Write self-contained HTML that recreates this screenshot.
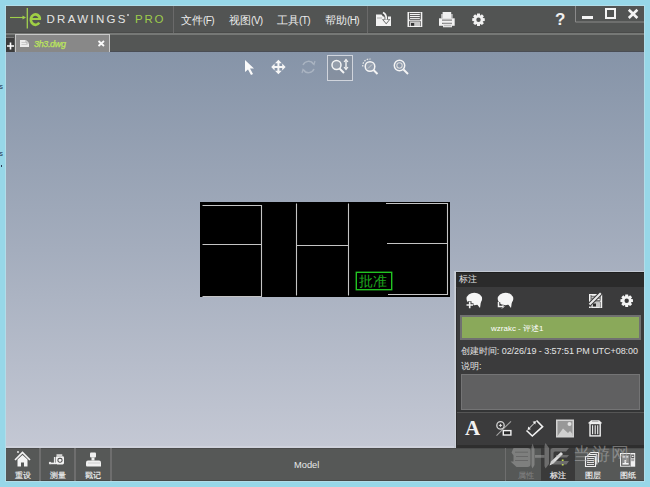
<!DOCTYPE html>
<html><head><meta charset="utf-8">
<style>
*{margin:0;padding:0;box-sizing:border-box}
html,body{width:650px;height:487px;overflow:hidden;background:#97d7e8;font-family:"Liberation Sans",sans-serif;position:relative}
.a{position:absolute}
.menu{color:#ececec;font-size:10.6px;top:14px;line-height:13px;white-space:nowrap}
.menu b{font-weight:normal;font-size:10px;letter-spacing:-0.6px}
.sep{background:#6a6a6a;width:1px}
svg{position:absolute;overflow:visible}
.bt{color:#f0f0f0;-webkit-text-stroke-width:0.15px;font-size:8px;line-height:9px;white-space:nowrap;text-align:center}
</style></head><body>
<div class="a" style="left:-1px;top:82px;font-size:8px;line-height:9px;color:#2a3550">s</div>
<div class="a" style="left:-1px;top:149px;font-size:8px;line-height:9px;color:#2a3550">s</div>
<div class="a" style="left:1px;top:165px;width:1px;height:2px;background:#2a3550"></div>
<div class="a" style="left:5px;top:5px;width:640px;height:477px;background:#b2dde9"></div>
<!-- window background -->
<div class="a" style="left:6px;top:6px;width:638px;height:475px;background:#565857"></div>
<!-- title bar -->
<div class="a" style="left:6px;top:6px;width:638px;height:27px;background:#525453"></div>
<div class="a" style="left:6px;top:32px;width:638px;height:1px;background:#4a4b4a"></div>
<div class="a" style="left:6px;top:33px;width:638px;height:2px;background:#767876"></div>
<div class="a" style="left:6px;top:35px;width:638px;height:17px;background:#545655;border-bottom:1px solid #4a4d54"></div>
<!-- logo -->
<svg style="left:0;top:0" width="200" height="34">
  <path d="M10 17.5H24" stroke="#9fcf4a" stroke-width="1.1"/>
  <path d="M22.5 15.5L26 17.5L22.5 19.5Z" fill="#9fcf4a"/>
  <path d="M27.3 8V28.5" stroke="#a2d050" stroke-width="1.3"/>
</svg>
<svg style="left:0;top:0" width="60" height="34">
  <path d="M40 18.8A4.6 5.2 0 1 0 39.2 22.6" fill="none" stroke="#9fcf45" stroke-width="2.7"/><path d="M31 19H41" stroke="#9fcf45" stroke-width="2"/>
</svg>
<div class="a" style="left:46.5px;top:12px;font-size:11.5px;line-height:14px;color:#e4e4e4;letter-spacing:2.3px">DRAWINGS</div>
<div class="a" style="left:126.5px;top:14px;width:2px;height:2px;border-radius:1px;background:#cfcfcf"></div>
<div class="a" style="left:135px;top:11.5px;font-size:11.5px;line-height:14px;color:#9dcb4c;letter-spacing:1.8px">PRO</div>
<div class="a sep" style="left:173px;top:6px;height:27px"></div>
<div class="a menu" style="left:181px">文件<b>(F)</b></div>
<div class="a menu" style="left:229px">视图<b>(V)</b></div>
<div class="a menu" style="left:277px">工具<b>(T)</b></div>
<div class="a menu" style="left:325px">帮助<b>(H)</b></div>
<div class="a sep" style="left:367px;top:6px;height:27px"></div>
<!-- title icons -->
<svg style="left:0;top:0" width="650" height="34">
  <!-- open folder -->
  <path d="M376 14.5h5.5l1.5 2h8v9.5h-15z" fill="#f2f2f2"/>
  <path d="M377 18h5" stroke="#9a9a9a" stroke-width="0.8"/>
  <path d="M383 12.5Q386.8 14.5 386.2 19.5" stroke="#525453" stroke-width="3.4" fill="none"/>
  <path d="M382 19.2h8.4l-4.2 5z" fill="#525453"/>
  <path d="M383 12.5Q386.8 14.5 386.2 19.5" stroke="#f4f4f4" stroke-width="1.7" fill="none"/>
  <path d="M383.3 19.8h5.8l-2.9 3.4z" fill="#f4f4f4"/>
  <!-- floppy -->
  <path d="M407.5 12h14.8v15h-14.8z" fill="#f4f4f4"/>
  <path d="M409.5 12.6v6.8h10.8v-6.8M409.5 13.5h10.8M409.5 15.5h10.8M409.5 17.5h10.8" fill="none" stroke="#505050" stroke-width="0.9"/>
  <path d="M409.5 26.2v-5h10.8v5" fill="none" stroke="#505050" stroke-width="0.9"/>
  <path d="M410 21.7h9.8v4.3h-9.8z" fill="#c6c6c6"/>
  <path d="M411 23h3.2v2.8h-3.2z" fill="#333"/>
  <!-- printer -->
  <path d="M441 14h11.8v4.5h-11.8z" fill="#b4b4b4"/>
  <path d="M442.6 12h8.6v6.5h-8.6z" fill="#f0f0f0"/>
  <path d="M439 18.3h15.7v7.5h-15.7z" fill="#f2f2f2"/>
  <path d="M442 20.1h10M442 23.3h10" stroke="#555" stroke-width="0.9"/>
  <path d="M443 23.8h9v3.5h-9z" fill="#e4e4e4"/>
  <path d="M444 25.6h7" stroke="#a0a0a0" stroke-width="0.6"/>
  <!-- gear -->
  <path d="M476.84 15.30 L477.10 13.45 L479.90 13.45 L480.16 15.30 L480.44 15.42 L481.93 14.30 L483.90 16.27 L482.78 17.76 L482.90 18.04 L484.75 18.30 L484.75 21.10 L482.90 21.36 L482.78 21.64 L483.90 23.13 L481.93 25.10 L480.44 23.98 L480.16 24.10 L479.90 25.95 L477.10 25.95 L476.84 24.10 L476.56 23.98 L475.07 25.10 L473.10 23.13 L474.22 21.64 L474.10 21.36 L472.25 21.10 L472.25 18.30 L474.10 18.04 L474.22 17.76 L473.10 16.27 L475.07 14.30 L476.56 15.42Z M480.70 19.70 A2.2 2.2 0 1 0 476.30 19.70 A2.2 2.2 0 1 0 480.70 19.70Z" fill="#f2f2f2" fill-rule="evenodd"/>
  <!-- window controls -->
  <path d="M575.5 6V22H644" fill="none" stroke="#8a8a8a" stroke-width="1"/>
  <path d="M582 16h11v3h-11z" fill="#f4f4f4"/>
  <path d="M606 9h9v9h-9z" fill="none" stroke="#f4f4f4" stroke-width="2"/>
  <path d="M628.8 9.8l8.6 8.2M637.4 9.8l-8.6 8.2" stroke="#f4f4f4" stroke-width="2.6"/>
</svg>
<div class="a" style="left:555px;top:10px;font-size:17px;font-weight:bold;color:#f0f0f0;line-height:19px">?</div>
<!-- tab strip -->
<div class="a" style="left:6px;top:37px;width:8px;height:1px;background:#777"></div>
<div class="a" style="left:6px;top:38px;width:8px;height:14px;background:#3c3c3c"></div>
<svg style="left:0;top:0" width="20" height="60"><path d="M7 46h7M10.5 42.5v7" stroke="#fff" stroke-width="1.6"/></svg>
<div class="a" style="left:15px;top:34px;width:95px;height:18px;background:#888;border:1px solid #c8c8c8;border-bottom:none"></div>
<svg style="left:0;top:0" width="120" height="60">
  <path d="M20 40h6l3 3v4h-9z" fill="#ececec"/>
  <path d="M26 40v3h3" fill="none" stroke="#999" stroke-width="0.7"/>
  <path d="M21.5 42.5h4M21.5 44.5h6" stroke="#bbb" stroke-width="0.7"/>
  <path d="M98.5 41l5.5 5M104 41l-5.5 5" stroke="#fafafa" stroke-width="1.8"/>
</svg>
<div class="a" style="left:34px;top:38px;font-size:9px;line-height:12px;font-style:italic;color:#bde65c;letter-spacing:-0.35px;-webkit-text-stroke:0.25px #bde65c">3h3.dwg</div>
<!-- viewport -->
<div class="a" style="left:6px;top:52px;width:638px;height:396px;background:linear-gradient(#8694a8,#a4adbd 50%,#c4c8d4)"></div>
<!-- toolbar -->
<div class="a" style="left:327px;top:54.5px;width:26px;height:26px;border:1px solid #d0d4dc;background:rgba(128,134,144,0.4)"></div>
<svg style="left:0;top:0" width="650" height="90">
  <path d="M245 60L245 72L248 69.5L251 75L253 74L250 68.5L254 68.5Z" fill="#fafafa"/>
  <g transform="translate(278.4 67)" fill="#f6f6f6">
    <path d="M0 -7.2L-3.4 -3.8H3.4Z M0 7.2L-3.4 3.8H3.4Z M-7.2 0L-3.8 -3.4V3.4Z M7.2 0L3.8 -3.4V3.4Z M-1 -3.8H1V3.8H-1Z M-3.8 -1H3.8V1H-3.8Z"/>
  </g>
  <g transform="translate(308.5 67)" fill="none" stroke="#a9b3c1" stroke-width="1.5">
    <path d="M-5.5 -2A6 6 0 0 1 5 -3"/>
    <path d="M5.5 2A6 6 0 0 1 -5 3"/>
    <path d="M3 -5L5.5 -2.5L6.5 -6" stroke-width="1.2"/>
    <path d="M-3 5L-5.5 2.5L-6.5 6" stroke-width="1.2"/>
  </g>
  <!-- zoom fit -->
  <circle cx="336.5" cy="65" r="4.5" fill="rgba(160,168,180,0.6)" stroke="#f4f4f4" stroke-width="1.5"/>
  <path d="M339.5 68.5L344 73" stroke="#f4f4f4" stroke-width="2"/>
  <path d="M346 60V69" stroke="#f4f4f4" stroke-width="1.4"/>
  <path d="M344 62L346 59.5L348 62M344 67L346 69.5L348 67" fill="none" stroke="#f4f4f4" stroke-width="1.2"/>
  <!-- zoom window -->
  <path d="M362.8 66.5A6.5 6.5 0 0 1 370.5 59.2" fill="none" stroke="#e6e6e6" stroke-width="1.3" stroke-dasharray="1.6 1.2"/>
  <circle cx="370" cy="66.5" r="4.8" fill="rgba(160,168,180,0.5)" stroke="#f4f4f4" stroke-width="1.5"/>
  <path d="M368 68.5L372 64.5" stroke="#d8d8d8" stroke-width="0.8"/>
  <path d="M373.5 70L377.5 74" stroke="#f4f4f4" stroke-width="2"/>
  <!-- zoom -->
  <circle cx="399.5" cy="65.5" r="5.2" fill="none" stroke="#f4f4f4" stroke-width="1.5"/>
  <circle cx="399.5" cy="65.5" r="2.7" fill="none" stroke="#dcdcdc" stroke-width="1.1"/>
  <path d="M403.5 69.5L408 74" stroke="#f4f4f4" stroke-width="2"/>
</svg>
<!-- drawing -->
<div class="a" style="left:200px;top:202px;width:250px;height:95px;background:#000"></div>
<svg style="left:0;top:0" width="650" height="320">
  <g stroke="#c4c4c4" stroke-width="1.1" fill="none">
    <path d="M202.5 205.5H261.5V296.5H202.5"/>
    <path d="M202.5 244.5H261.5"/>
    <path d="M296.5 203.5V295.5M348.5 203.5V295.5M296.5 245.5H348.5"/>
    <path d="M386 203.5H447.5V294.5H388"/>
    <path d="M387 243.5H447.5"/>
  </g>
  <rect x="356.3" y="272.3" width="35.4" height="17.4" fill="none" stroke="#22c422" stroke-width="1.4"/>
</svg>
<div class="a" style="left:359px;top:273px;font-size:14px;line-height:16px;color:#1ea81e;font-weight:300;transform:scaleY(1.0)">批准</div>
<div class="a" style="left:6px;top:446px;width:450px;height:2px;background:#cfd2dc"></div>
<!-- panel -->
<div class="a" style="left:454px;top:271px;width:190px;height:1px;background:#c3c9d3"></div>
<div class="a" style="left:454px;top:272px;width:2px;height:176px;background:linear-gradient(90deg,#bcc2cc,#d2d6de)"></div>
<div class="a" style="left:456px;top:272px;width:188px;height:176px;background:#3b3b3c"></div>
<div class="a" style="left:456px;top:272px;width:188px;height:15px;background:#2b2b2b;border-top:1px solid #1e1e1e"></div>
<div class="a" style="left:459px;top:274px;font-size:9px;line-height:11px;color:#e4e4e4">标注</div>
<div class="a" style="left:460px;top:315px;width:181px;height:25px;background:#8aa95a;border:2px solid #707070"></div>
<div class="a" style="left:491px;top:323px;font-size:8px;line-height:11px;color:#fff">wzrakc - 评述1</div>
<div class="a" style="left:461px;top:346px;font-size:9px;line-height:11px;color:#e4e4e4;white-space:nowrap;letter-spacing:-0.05px">创建时间: 02/26/19 - 3:57:51 PM UTC+08:00</div>
<div class="a" style="left:461px;top:361px;font-size:9px;line-height:11px;color:#e4e4e4">说明:</div>
<div class="a" style="left:461px;top:374px;width:179px;height:36px;background:#606061;border:1px solid #747475"></div>
<div class="a" style="left:456px;top:410px;width:188px;height:2px;background:#333435"></div>
<div class="a" style="left:456px;top:412px;width:188px;height:1px;background:#555"></div>
<div class="a" style="left:456px;top:288px;width:1px;height:160px;background:#2e2e2f"></div>
<div class="a" style="left:456px;top:445px;width:188px;height:3px;background:#2e2e2e"></div>
<svg style="left:0;top:0" width="650" height="450">
  <!-- bubbles -->
  <ellipse cx="474.3" cy="299" rx="7.8" ry="6.2" fill="#f6f6f6"/>
  <path d="M476 303L480 308L481 301Z" fill="#f6f6f6"/>
  <path d="M466 305h7.5M469.7 301.2v7.5" stroke="#3b3b3c" stroke-width="3.6"/>
  <path d="M466.5 305h6.5M469.7 301.7v6.5" stroke="#f2f2f2" stroke-width="1.6"/>
  <ellipse cx="505.5" cy="299" rx="7.8" ry="6.2" fill="#f6f6f6"/>
  <path d="M507 303L511 308L512 301Z" fill="#f6f6f6"/>
  <path d="M498.5 302v4.5h5" fill="none" stroke="#3b3b3c" stroke-width="3.4"/>
  <path d="M498.5 302v4.5h5" fill="none" stroke="#f2f2f2" stroke-width="1.5"/>
  <path d="M502 304.5l2 2l-2 2" fill="none" stroke="#eee" stroke-width="1"/>
  <!-- floppy pencil -->
  <path d="M589 294h13.2v14h-13.2z" fill="#f2f2f2"/>
  <path d="M591 295v5.6h9.2v-5.6M591 296.3h9.2M591 298.2h9.2" fill="none" stroke="#444" stroke-width="0.8"/>
  <path d="M591 307.5v-5.6h9.2v5.6" fill="none" stroke="#444" stroke-width="0.8"/>
  <path d="M591.4 302.3h8.4v4.8h-8.4z" fill="#c8c8c8"/>
  <path d="M593 303.5h3v3h-3z" fill="#2a2a2a"/>
  <path d="M588.5 305.5L601.5 292.5" stroke="#3b3b3c" stroke-width="4"/>
  <path d="M589.5 304.5L600.8 293.2" stroke="#ececec" stroke-width="2"/>
  <!-- gear -->
  <path d="M625.04 296.30 L625.30 294.45 L628.10 294.45 L628.36 296.30 L628.64 296.42 L630.13 295.30 L632.10 297.27 L630.98 298.76 L631.10 299.04 L632.95 299.30 L632.95 302.10 L631.10 302.36 L630.98 302.64 L632.10 304.13 L630.13 306.10 L628.64 304.98 L628.36 305.10 L628.10 306.95 L625.30 306.95 L625.04 305.10 L624.76 304.98 L623.27 306.10 L621.30 304.13 L622.42 302.64 L622.30 302.36 L620.45 302.10 L620.45 299.30 L622.30 299.04 L622.42 298.76 L621.30 297.27 L623.27 295.30 L624.76 296.42Z M628.90 300.70 A2.2 2.2 0 1 0 624.50 300.70 A2.2 2.2 0 1 0 628.90 300.70Z" fill="#f4f4f4" fill-rule="evenodd"/>
  <!-- hide icon -->
  <path d="M511 421.3L496.5 435.6" stroke="#a4a4a4" stroke-width="1.1"/>
  <circle cx="500.5" cy="425.4" r="3.7" fill="#3b3b3c" stroke="#d4d4d4" stroke-width="1.3"/>
  <path d="M500.5 423.5L501.2 424.7L502.4 425.4L501.2 426.1L500.5 427.3L499.8 426.1L498.6 425.4L499.8 424.7Z" fill="#e8e8e8"/>
  <rect x="503.3" y="430.6" width="7.6" height="4.4" fill="#2a2a2a" stroke="#f2f2f2" stroke-width="1.4"/>
  <!-- ruler -->
  <path d="M526.5 430.5L532.3 436L542.6 426.6L536.5 420.5" fill="none" stroke="#f2f2f2" stroke-width="1.6" stroke-linejoin="miter"/>
  <path d="M529 428.5L535 422.5" stroke="#f2f2f2" stroke-width="1"/>
  <path d="M527.6 429.9L528.2 426.6L530.9 429.3Z M535.9 421.1L532.6 421.7L535.3 424.4Z" fill="#f2f2f2"/>
  <!-- image -->
  <rect x="556" y="419.5" width="18" height="18" fill="#d2d2d2"/>
  <rect x="557.5" y="421" width="15" height="15" fill="#989898"/>
  <path d="M557.5 436L563 428.5L568 433L570 431L572.5 434V436Z" fill="#d0d0d0"/>
  <circle cx="569.5" cy="424" r="2" fill="#e2e2e2"/>
  <!-- trash -->
  <path d="M591.2 420.3H599.1L601.8 422.8V423.6H588.3V422.8Z" fill="#ececec"/>
  <path d="M592 421.3h6.3" stroke="#9a9a9a" stroke-width="0.8"/>
  <rect x="590" y="423.5" width="10.2" height="12.4" fill="none" stroke="#f0f0f0" stroke-width="1.4"/>
  <path d="M592.6 425.2v9M595.2 425.2v9M597.7 425.2v9" stroke="#f0f0f0" stroke-width="1.1"/>
</svg>
<div class="a" style="left:465px;top:418px;font-size:21px;line-height:20px;font-weight:bold;color:#f2f2f2;font-family:'Liberation Serif',serif">A</div>
<!-- bottom bar -->
<div class="a" style="left:6px;top:448px;width:638px;height:33px;background:#565857;border-top:1px solid #4b4c4c;border-bottom:1px solid #474948"></div>
<div class="a" style="left:39px;top:448px;width:2px;height:33px;background:#6e6e6e"></div>
<div class="a" style="left:74px;top:448px;width:2px;height:33px;background:#6e6e6e"></div>
<div class="a" style="left:110px;top:448px;width:2px;height:33px;background:#6e6e6e"></div>
<div class="a" style="left:505px;top:448px;width:1px;height:33px;background:#6e6e6e"></div>
<div class="a" style="left:541px;top:448px;width:34px;height:33px;background:#3a3a3a"></div>
<div class="a" style="left:294px;top:460px;font-size:9.3px;line-height:11px;color:#e8e8e8">Model</div>
<div class="a bt" style="left:14px;top:471px;width:17px">重设</div>
<div class="a bt" style="left:49px;top:471px;width:17px">测量</div>
<div class="a bt" style="left:85px;top:471px;width:16px">戳记</div>
<div class="a bt" style="left:517px;top:471px;width:17px;color:#7c7c7c">属性</div>
<div class="a bt" style="left:550px;top:471px;width:16px">标注</div>
<div class="a bt" style="left:585px;top:471px;width:16px">图层</div>
<div class="a bt" style="left:620px;top:471px;width:16px">图纸</div>
<svg style="left:0;top:0" width="650" height="487">
  <!-- home -->
  <path d="M15 460L22.5 452.5L30 460" fill="none" stroke="#f4f4f4" stroke-width="1.6"/>
  <path d="M17.5 459.5L22.5 455L27.5 459.5V466.5H24V462.5H21V466.5H17.5Z" fill="#f4f4f4"/>
  <circle cx="18" cy="452" r="0.9" fill="#f4f4f4"/>
  <!-- measure -->
  <rect x="56.5" y="454.2" width="5.8" height="1.8" fill="#d4d4d4"/>
  <rect x="55.8" y="456.3" width="8.2" height="8.2" rx="1.4" fill="#f4f4f4"/>
  <rect x="57.9" y="458.4" width="4.2" height="3.8" rx="1.6" fill="none" stroke="#555" stroke-width="1.1"/>
  <path d="M54.6 457V463.5" stroke="#e8e8e8" stroke-width="1.4"/>
  <path d="M49.5 463.4H56" stroke="#f0f0f0" stroke-width="1.6"/>
  <circle cx="50" cy="463" r="1.2" fill="#e8e8e8"/>
  <!-- stamp -->
  <rect x="90" y="452.5" width="6" height="5" rx="1" fill="#f0f0f0"/>
  <rect x="91.5" y="457.5" width="3" height="3" fill="#f0f0f0"/>
  <path d="M86 462.5Q86 460.5 88 460.5H99Q101 460.5 101 462.5V466.5H87Q86 466.5 86 465Z" fill="#f0f0f0"/>
  <path d="M88 463h12" stroke="#bbb" stroke-width="0.6"/>
  <!-- pencil -->
  <path d="M549.5 465.5L551 461.5L561 452L563 454L553.5 463.5Z" fill="#dedede"/>
  <path d="M562.7 459.5v1.5M562.7 464v1.5" stroke="#c4e04a" stroke-width="1.8"/>
  <!-- layers -->
  <g fill="none" stroke="#f0f0f0">
    <path d="M589 455Q589 452.5 591 452.5H598.5V462.5" stroke-width="1"/>
    <path d="M587.3 456.8Q587.3 454.5 589.3 454.5H596.8V464.5" stroke-width="1"/>
    <path d="M585.5 456.5h10v10h-10z" stroke-width="1.1" fill="#555"/>
    <path d="M587 458.5h7M587 460.5h7M587 462.5h7M587 464.5h7" stroke-width="0.9"/>
  </g>
  <!-- sheet -->
  <rect x="620" y="453" width="15.2" height="13.7" fill="#f0f0f0"/>
  <rect x="621.5" y="454.5" width="8" height="10.8" fill="#8c8c8c" stroke="#5a5a5a" stroke-width="0.8"/>
  <path d="M622.6 456.2h2.6v1.4h-2.6zM626.2 456.2h2v1.4h-2zM622.6 463h6v1.5h-6zM624.5 460h1.6v3h-1.6z" fill="#f4f4f4"/>
  <path d="M630.5 453.5v13" stroke="#777" stroke-width="0.7"/>
  <rect x="631.2" y="454.5" width="3" height="3.8" fill="#585858"/>
  <rect x="631.8" y="455.8" width="1.8" height="1.2" fill="#eee"/>
  <rect x="631.2" y="459" width="3" height="2.2" fill="#a8a8a8"/>
</svg>
<!-- watermark -->
<svg style="left:0;top:0" width="650" height="487">
  <g fill="rgba(180,180,180,0.42)">
    <path d="M513.5 448H527.5Q530.5 448 530.5 451V464Q530.5 467 527.5 467H516.5L510.5 461.5H513.5V455.5L511.5 452.5Z"/>
    <path d="M532.5 443.5L534.5 449V465L532.5 468.5L531.5 466V447Z"/>
    <path d="M545.5 443L549 448V464L545.5 468.5L544.5 466V446Z"/>
    <path d="M535 455H544.5V457.8H535Z"/>
    <path d="M553 448H569L566 451.5H555Q553.5 451.5 553.5 453V459.5Q553.5 461 555 461H569L566.5 464.5H553Q550.5 464.5 550.5 462V450.5Q550.5 448 553 448Z"/>
    <path d="M556 455H569L567 457.5H556Z"/>
  </g>
  <path d="M515 452.2H528M516 456.5H528M515 460.5H528" stroke="rgba(60,60,60,0.35)" stroke-width="1"/>
</svg>
<div class="a" style="left:573px;top:444px;font-size:18px;line-height:20px;color:rgba(185,185,185,0.5);white-space:nowrap;letter-spacing:1px">当游网</div>
</body></html>
